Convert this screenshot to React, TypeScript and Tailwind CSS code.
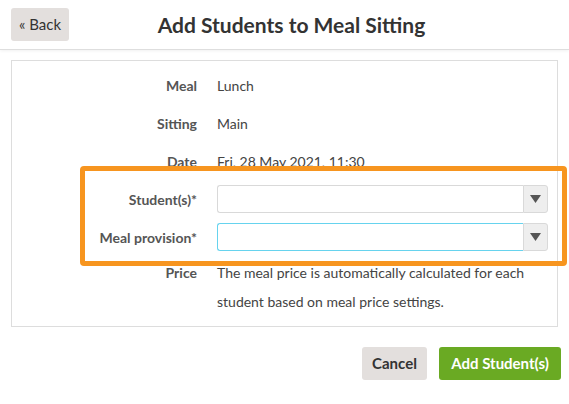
import React from "react";

function Select({ focused }: { focused?: boolean }) {
  return (
    <div className="flex h-[28px] w-full">
      <div
        className={
          focused
            ? "flex-1 rounded-l-[3px] border border-r-0 border-[#66d3ee] bg-white"
            : "flex-1 rounded-l-[3px] border border-r-0 border-[#d9d9d9] bg-white"
        }
      />
      <div className="flex w-[25px] items-center justify-center rounded-r-[3px] border border-[#d9d9d9] bg-[#eeeeee]">
        <svg width="11" height="8" viewBox="0 0 11 8">
          <polygon points="0,0 11,0 5.5,8" fill="#555" />
        </svg>
      </div>
    </div>
  );
}

function Row({ label, children }: { label: string; children: React.ReactNode }) {
  return (
    <div className="flex h-[38px] items-center">
      <div className="w-[185px] shrink-0 pr-0 text-right font-bold text-[#555]">{label}</div>
      <div className="ml-[20px] flex-1 text-[#444]">{children}</div>
    </div>
  );
}

export default function App() {
  return (
    <div
      className="relative h-[404px] w-[569px] overflow-hidden bg-white text-[14px]"
      style={{ fontFamily: "Lato, 'Noto Sans', sans-serif" }}
    >
      <div className="flex h-[50px] items-center border-b border-[#dedede] px-[11px] shadow-[0_1px_3px_rgba(0,0,0,0.06)]">
        <button className="h-[33px] w-[58px] rounded-[3px] bg-[#e3dfdd] text-[15px] text-[#333]">
          « Back
        </button>
        <div className="flex-1 pr-[44px] text-center text-[21px] font-bold text-[#333]">
          Add Students to Meal Sitting
        </div>
      </div>

      <div className="mx-[11px] mt-[10px] border border-[#dddddd] pb-[10px] pr-[9px] pt-[5px]">
        <Row label="Meal">Lunch</Row>
        <Row label="Sitting">Main</Row>
        <Row label="Date">Fri, 28 May 2021, 11:30</Row>
        <Row label="Student(s)*">
          <Select />
        </Row>
        <Row label="Meal provision*">
          <Select focused />
        </Row>
        <div className="flex pt-[2px] leading-[29px]">
          <div className="w-[185px] shrink-0 text-right font-bold text-[#555]">Price</div>
          <div className="ml-[20px] flex-1 text-[#444]">
            The meal price is automatically calculated for each
            <br />
            student based on meal price settings.
          </div>
        </div>
      </div>

      <div className="mr-[8px] mt-[20px] flex justify-end gap-[12px]">
        <button className="h-[33px] w-[65px] rounded-[3px] bg-[#e3dfdd] text-[15px] font-bold text-[#333]">
          Cancel
        </button>
        <button className="h-[33px] w-[122px] rounded-[3px] bg-[#6aaa23] text-[15px] font-bold text-white">
          Add Student(s)
        </button>
      </div>

      <div className="pointer-events-none absolute left-[80px] top-[166px] h-[100px] w-[487px] rounded-[4px] border-[5px] border-[#f7951f]" />
    </div>
  );
}
